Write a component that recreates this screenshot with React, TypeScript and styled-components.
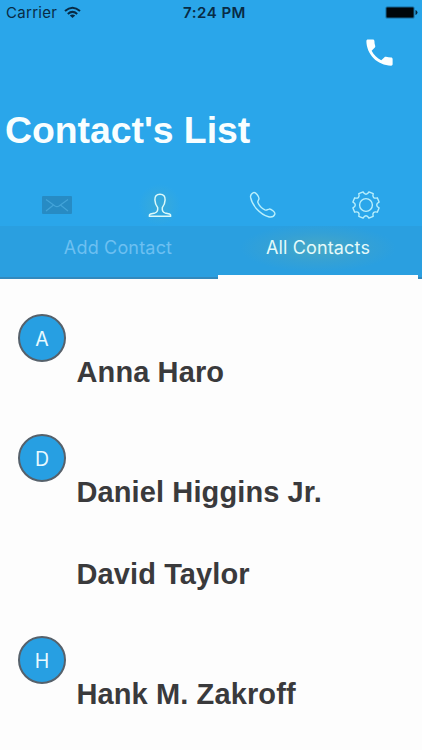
import React from "react";
import styled, { createGlobalStyle } from "styled-components";

const GlobalStyle = createGlobalStyle`
  * { box-sizing: border-box; }
  html, body { margin: 0; background: #fdfdfd; }
  body { overflow: hidden; }
`;

const Screen = styled.main`
  width: 422px;
  height: 750px;
  overflow: hidden;
  background: #fdfdfd;
  font-family: "Inter", "Liberation Sans", sans-serif;
`;

const Header = styled.header`
  display: flex;
  flex-direction: column;
  height: 226px;
  background: #2aa6ea;
`;

const StatusBar = styled.div`
  display: grid;
  grid-template-columns: 1fr auto 1fr;
  align-items: center;
  height: 24px;
  padding: 0 4px 0 6px;
  color: #082b45;
`;

const Carrier = styled.div`
  display: flex;
  align-items: center;
  gap: 7px;
  font-size: 15px;
  letter-spacing: 0.3px;
`;

const Clock = styled.time`
  font-size: 15px;
  font-weight: 600;
  letter-spacing: 0.5px;
  padding-left: 5px;
`;

const BatterySlot = styled.div`
  display: flex;
  justify-content: flex-end;
`;

const Actions = styled.div`
  display: flex;
  justify-content: flex-end;
  height: 56px;
  padding: 11px 25px 0 0;
`;

const Title = styled.h1`
  margin: 28px 0 0 5px;
  height: 44px;
  white-space: nowrap;
  font: 700 37.4px/44px "Liberation Sans", Arial, sans-serif;
  letter-spacing: -0.04px;
  color: #f8feff;
`;

const IconNav = styled.nav`
  display: grid;
  grid-template-columns: repeat(4, 103px);
  justify-content: start;
  align-items: center;
  padding-left: 5px;
  height: 42px;
  margin-top: 32px;
`;

const NavItem = styled.a<{ $active?: boolean }>`
  display: grid;
  place-items: center;
  height: 42px;
  background: ${(p) =>
    p.$active
      ? "radial-gradient(circle closest-side, rgba(90, 180, 180, 0.32), transparent)"
      : "none"};
`;

const Tabs = styled.nav`
  display: grid;
  grid-template-columns: 200px 200px;
  justify-content: end;
  padding-right: 4px;
  height: 53px;
  background: linear-gradient(#2a9fe0 51px, #3289bd 51px);
`;

const Tab = styled.a<{ $active?: boolean }>`
  height: 53px;
  text-align: center;
  font-size: 18px;
  line-height: 44px;
  white-space: nowrap;
  letter-spacing: ${(p) => (p.$active ? "0.15px" : "0.18px")};
  color: ${(p) => (p.$active ? "#e4fafa" : "#6dc0f1")};
  border-bottom: 4px solid ${(p) => (p.$active ? "#fdfdfd" : "transparent")};
  background: ${(p) =>
    p.$active
      ? "radial-gradient(ellipse 78px 24px at 50% 22px, rgba(92, 174, 178, 0.6), rgba(76, 165, 190, 0.3) 60%, transparent)"
      : "none"};
`;

const List = styled.section`
  padding-top: 14px;
`;

const SectionHeader = styled.div`
  height: 38px;
  padding: 21px 0 0 18px;
`;

const Badge = styled.div`
  width: 48px;
  height: 48px;
  border: 2.5px solid #56616b;
  border-radius: 50%;
  background: #279fe2;
  color: #e9faff;
  display: grid;
  place-items: center;
  font-size: 19.5px;
  line-height: 1;
  padding-top: 3px;
`;

const Row = styled.div`
  height: 82px;
  padding-left: 76.5px;
  white-space: nowrap;
  font: 700 29px/82px "Liberation Sans", Arial, sans-serif;
  letter-spacing: 0.11px;
  color: #3a3a3c;
`;

const WifiIcon = () => (
  <svg width="17" height="13" viewBox="0 0 17 13" fill="none" stroke="#082b45" strokeWidth="2">
    <path d="M1 5Q8.5-1.6 16 5" />
    <path d="M3.8 8Q8.5 3.8 13.2 8" />
    <path d="M8.5 12 5.8 9.6Q8.5 7.6 11.2 9.6Z" fill="#082b45" stroke="none" />
  </svg>
);

const BatteryIcon = () => (
  <svg width="33" height="13" viewBox="0 0 33 13">
    <rect x="0.5" y="0.5" width="29" height="12" rx="1.5" fill="#176695" />
    <rect x="1.5" y="1.5" width="27" height="10" rx="1" fill="#00060a" />
    <path d="M30.5 4q2 .6 2 2.5t-2 2.5z" fill="#06283f" />
  </svg>
);

const CallIcon = () => (
  <svg width="35" height="35" viewBox="0 0 24 24" fill="#fcffff">
    <path d="M6.62 10.79c1.44 2.83 3.76 5.14 6.59 6.59l2.2-2.2c.27-.27.67-.36 1.02-.24 1.12.37 2.33.57 3.57.57.55 0 1 .45 1 1V20c0 .55-.45 1-1 1-9.39 0-17-7.61-17-17 0-.55.45-1 1-1h3.5c.55 0 1 .45 1 1 0 1.25.2 2.45.57 3.57.11.35.03.74-.25 1.02l-2.2 2.2z" />
  </svg>
);

const MailIcon = () => (
  <svg width="30" height="18" viewBox="0 0 30 18">
    <rect width="30" height="18" rx="1" fill="#278bc4" />
    <path
      d="M4 3.5 13 10q2 1.2 4 0L26 3.5M4 15l7.5-6M26 15l-7.5-6"
      fill="none"
      stroke="#43a4d9"
      strokeWidth="1.2"
    />
  </svg>
);

const PersonIcon = () => (
  <svg width="24" height="25" viewBox="0 0 24 25" fill="none" stroke="#dcfafa" strokeWidth="1.5" strokeLinejoin="round">
    <path d="M12 1.2C8.4 1.2 6.7 3.6 6.9 7c.1 3.7 1.6 6 2.8 7.6.3 3.1-.6 4.7-2.7 5.3L2.5 21q-1.3.4-1.2 2.3h21.4q.1-1.9-1.2-2.3L17 19.9c-2.1-.6-3-2.2-2.7-5.3 1.2-1.6 2.7-3.9 2.8-7.6.2-3.4-1.5-5.8-5.1-5.8z" />
  </svg>
);

const HandsetIcon = () => (
  <svg width="28" height="28" viewBox="0 0 28 28" fill="none" stroke="#b9effc" strokeWidth="1.4" strokeLinejoin="round">
    <path d="M4.4 1.6C2.4 2.6 1.2 4 1.6 6.4 3.2 14.5 11 23.5 19.5 25.7c3 .8 5.5-.5 6.3-2.5.8-1.8-3.9-5.5-5.7-5.1-1.7.3-2.3 1.6-4.2.8-3-1.4-5.9-4.4-7-7.3-.7-1.8 1.1-2.4 1.1-4.1C10 5.6 6.700.7 4.400 1.600z" />
  </svg>
);

const polar = (radius: number, degrees: number) => {
  const angle = (degrees * Math.PI) / 180;
  return `${(14 + radius * Math.cos(angle)).toFixed(2)} ${(14 + radius * Math.sin(angle)).toFixed(2)}`;
};

// Eight teeth with flat tips, separated by curved notches.
const gearPath =
  Array.from({ length: 8 }, (_, i) => {
    const tooth = i * 45 + 22.5;
    return `${i === 0 ? "M" : "L"}${polar(13.4, tooth - 10)}L${polar(13.4, tooth + 10)}C${polar(10, tooth + 15)} ${polar(10, tooth + 30)} ${polar(13.4, tooth + 35)}`;
  }).join("") + "Z";

const GearIcon = () => (
  <svg width="28" height="28" viewBox="0 0 28 28" fill="none" stroke="#b9effc" strokeWidth="1.4" strokeLinejoin="round">
    <circle cx="14" cy="14" r="6.4" />
    <path d={gearPath} />
  </svg>
);

const groups = [
  { letter: "A", names: ["Anna Haro"] },
  { letter: "D", names: ["Daniel Higgins Jr.", "David Taylor"] },
  { letter: "H", names: ["Hank M. Zakroff"] },
];

export default function App() {
  return (
    <>
      <GlobalStyle />
      <Screen>
        <Header>
          <StatusBar>
            <Carrier>Carrier <WifiIcon /></Carrier>
            <Clock>7:24 PM</Clock>
            <BatterySlot><BatteryIcon /></BatterySlot>
          </StatusBar>
          <Actions><CallIcon /></Actions>
          <Title>Contact's List</Title>
          <IconNav>
            <NavItem><MailIcon /></NavItem>
            <NavItem $active><PersonIcon /></NavItem>
            <NavItem><HandsetIcon /></NavItem>
            <NavItem><GearIcon /></NavItem>
          </IconNav>
        </Header>
        <Tabs>
          <Tab>Add Contact</Tab>
          <Tab $active>All Contacts</Tab>
        </Tabs>
        <List>
          {groups.map((group) => (
            <React.Fragment key={group.letter}>
              <SectionHeader><Badge>{group.letter}</Badge></SectionHeader>
              {group.names.map((name) => <Row key={name}>{name}</Row>)}
            </React.Fragment>
          ))}
        </List>
      </Screen>
    </>
  );
}
